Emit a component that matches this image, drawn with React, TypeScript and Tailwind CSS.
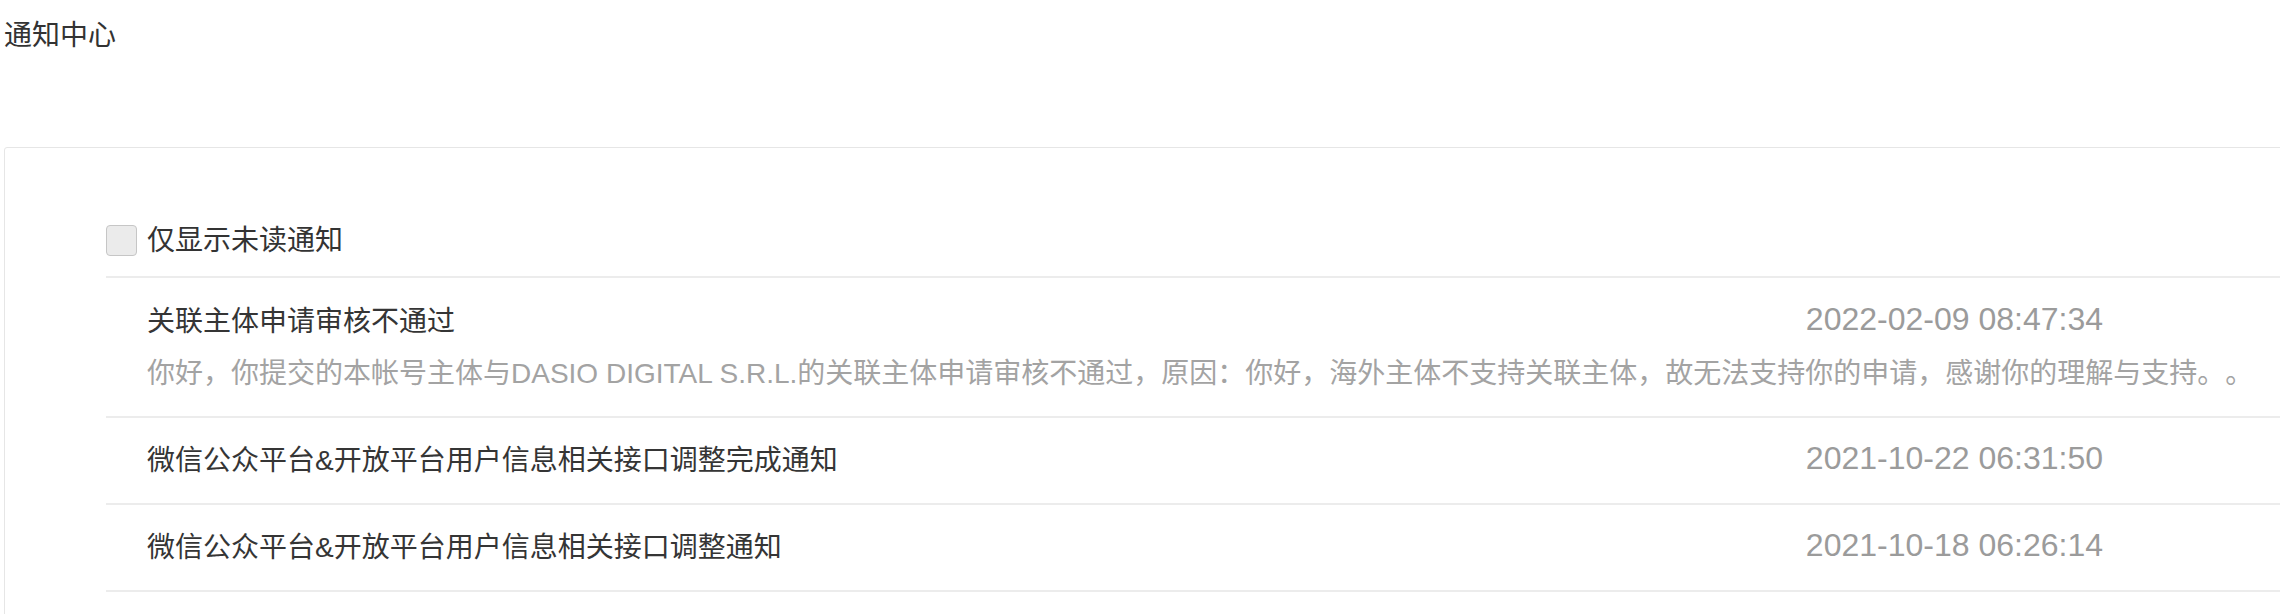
const notices = [
  {
    id: 1,
    title: '关联主体申请审核不通过',
    time: '2022-02-09 08:47:34',
    desc: '你好，你提交的本帐号主体与DASIO DIGITAL S.R.L.的关联主体申请审核不通过，原因：你好，海外主体不支持关联主体，故无法支持你的申请，感谢你的理解与支持。。',
  },
  {
    id: 2,
    title: '微信公众平台&开放平台用户信息相关接口调整完成通知',
    time: '2021-10-22 06:31:50',
  },
  {
    id: 3,
    title: '微信公众平台&开放平台用户信息相关接口调整通知',
    time: '2021-10-18 06:26:14',
  },
]

export default function App() {
  return (
    <div className="h-screen w-full overflow-hidden bg-white pl-[4px] text-[#333] font-['Liberation_Sans','Noto_Sans_CJK_SC',sans-serif] [text-spacing-trim:space-all]">
      <h1 className="pt-[16px] text-[28px] leading-[40px] font-normal">通知中心</h1>

      <div className="mt-[91px] w-[2400px] rounded-[3px] border border-[#e6e6e6] pt-[77px] pb-[80px] pl-[101px]">
        {/* 只看未读 */}
        <label className="flex items-center gap-[10px] border-b-2 border-[#ececec] pb-[20px]">
          <span className="h-[31px] w-[31px] rounded-[4px] border border-[#c6c6c6] bg-[#ebebeb]" />
          <span className="text-[28px] leading-[31px] text-[#333]">仅显示未读通知</span>
        </label>

        {notices.map(item => (
          <div
            key={item.id}
            className={`border-b-2 border-[#ececec] pl-[41px] ${item.desc ? 'pt-[24px] pb-[22px]' : 'pt-[23px] pb-[22px]'}`}
          >
            <div className="flex w-[1956px] items-start justify-between">
              <span className="text-[28px] leading-[40px] text-[#353535]">{item.title}</span>
              <span className="text-[32px] leading-[34px] text-[#9b9b9b]">{item.time}</span>
            </div>
            {item.desc && (
              <p className="mt-[12px] whitespace-nowrap text-[28px] leading-[40px] text-[#a3a3a3]">{item.desc}</p>
            )}
          </div>
        ))}
      </div>
    </div>
  )
}
